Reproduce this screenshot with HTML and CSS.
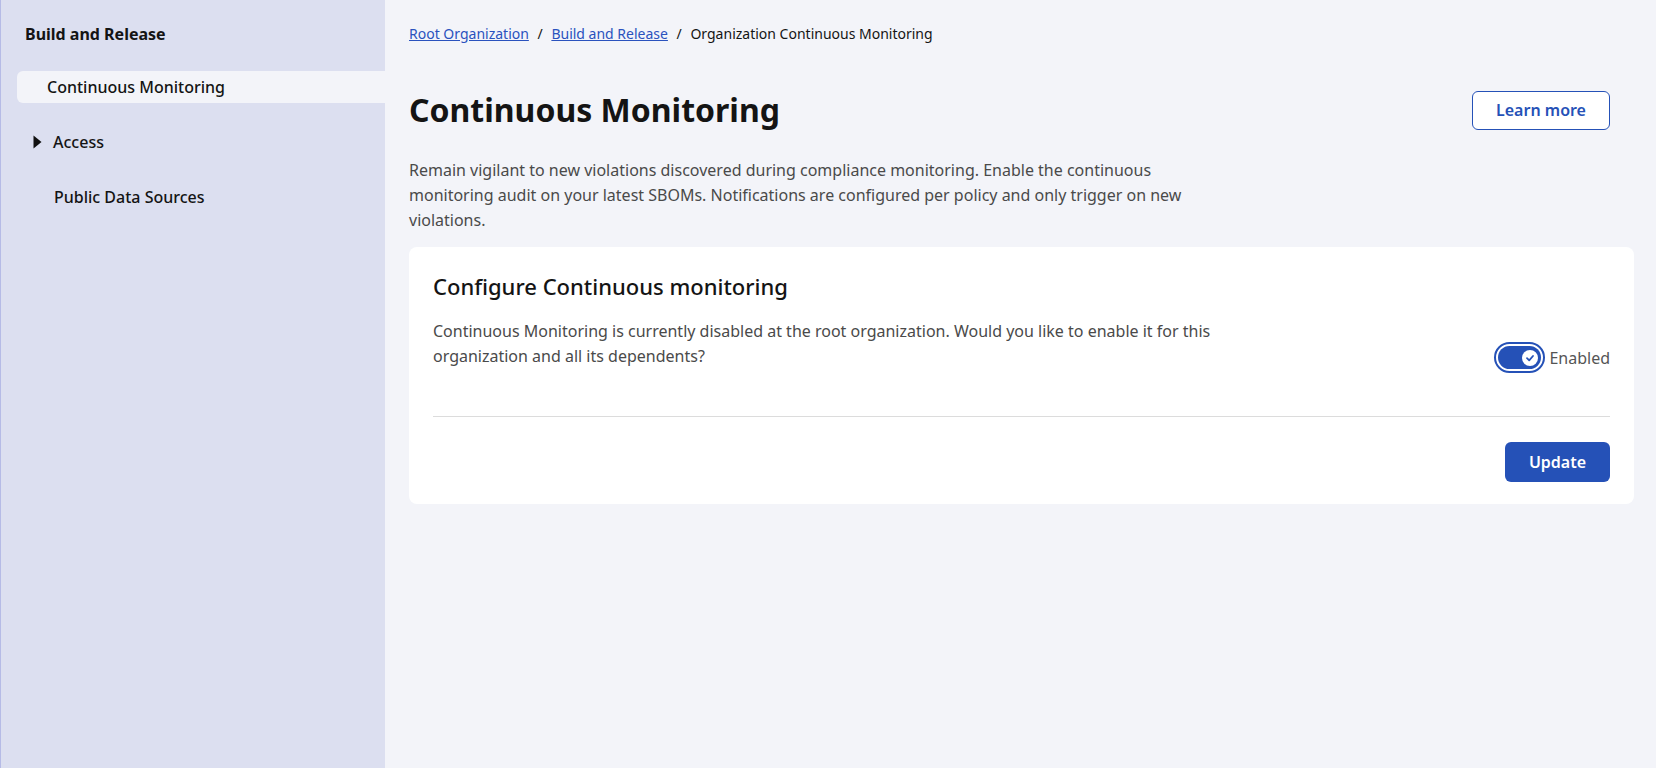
FILE: index.html
```html
<!DOCTYPE html>
<html>
<head>
<meta charset="UTF-8">
<title>Continuous Monitoring</title>
<link rel="stylesheet" href="styles.css">
</head>
<body>

	<div id="side">
		<div class="side-title">Build and Release</div>
		<ul class="nav">
			<li class="nav-item active">Continuous Monitoring</li>
			<li class="nav-item group">
				<svg class="caret" width="9" height="14" viewBox="0 0 9 14"><path d="M0.5 0.5 L8.5 7 L0.5 13.5 Z" fill="#111"/></svg>
				<span>Access</span>
			</li>
			<li class="nav-item sub">Public Data Sources</li>
		</ul>
	</div>

	<div id="main">
		<div class="crumbs">
			<a href="#">Root Organization</a>
			<span class="sep">/</span>
			<a href="#">Build and Release</a>
			<span class="sep">/</span>
			<span>Organization Continuous Monitoring</span>
		</div>

		<div class="head">
			<h1>Continuous Monitoring</h1>
			<button class="btn-outline">Learn more</button>
		</div>

		<p class="intro">Remain vigilant to new violations discovered during compliance monitoring. Enable the continuous monitoring audit on your latest SBOMs. Notifications are configured per policy and only trigger on new violations.</p>

		<div class="card">
			<h2>Configure Continuous monitoring</h2>
			<div class="card-row">
				<p class="card-text">Continuous Monitoring is currently disabled at the root organization. Would you like to enable it for this organization and all its dependents?</p>
				<div class="switch">
					<span class="toggle">
						<span class="track">
							<span class="knob">
								<svg width="10" height="10" viewBox="0 0 10 10"><path d="M2 5.2 L4.2 7.3 L8 3" fill="none" stroke="#2551b7" stroke-width="1.8" stroke-linecap="round" stroke-linejoin="round"/></svg>
							</span>
						</span>
					</span>
					<span class="switch-label">Enabled</span>
				</div>
			</div>
			<div class="card-foot">
				<button class="btn-primary">Update</button>
			</div>
		</div>
	</div>

</body>
</html>
```

FILE: styles.css
```css
body, div, ul, li, h1, h2, p{
	margin : 0;
	padding : 0;
}
body{
	display : flex;
	height : 768px;
	background : #f3f4f9;
	font-family : "Noto Sans", "Open Sans", sans-serif;
	color : #141414;
}
#side{
	width : 384px;
	flex : none;
	border-left : 1px solid #b6bbe6;
	background : #dcdff0;
	padding-top : 22px;
}
.side-title{
	padding-left : 24px;
	font-size : 16px;
	font-weight : 700;
	line-height : 24px;
}
.nav{
	list-style-type : none;
	margin-top : 25px;
	margin-left : 16px;
	display : flex;
	flex-direction : column;
	gap : 23px;
}
.nav-item{
	height : 32px;
	display : flex;
	align-items : center;
	font-size : 16px;
	font-weight : 500;
}
.active{
	background : #f3f4f9;
	border-radius : 6px 0 0 6px;
	padding-left : 30px;
}
.group{
	padding-left : 16px;
	gap : 11px;
}
.sub{
	padding-left : 37px;
}
#main{
	flex : 1;
	padding : 24px 22px 24px 24px;
}
.crumbs{
	font-size : 14px;
	line-height : 20px;
}
.crumbs a{
	color : #2a52be;
}
.sep{
	margin : 0 5px;
}
.head{
	display : flex;
	align-items : center;
	justify-content : space-between;
	margin-top : 46px;
	padding-right : 24px;
}
h1{
	font-size : 32px;
	line-height : 40px;
	font-weight : 700;
}
.btn-outline{
	width : 138px;
	height : 39px;
	background : #fff;
	border : 1px solid #2551b7;
	border-radius : 6px;
	color : #2551b7;
	font-family : inherit;
	font-size : 16px;
	font-weight : 600;
}
.intro{
	margin-top : 28px;
	max-width : 800px;
	font-size : 16px;
	line-height : 24.8px;
	color : #4a4a4a;
}
.card{
	margin-top : 15px;
	background : #fff;
	border-radius : 8px;
	padding : 24px 24px 22px 24px;
}
h2{
	font-size : 22px;
	line-height : 30px;
	font-weight : 500;
}
.card-row{
	display : flex;
	justify-content : space-between;
	align-items : flex-end;
	margin-top : 18px;
	padding-bottom : 48px;
	border-bottom : 1px solid #dcdcdc;
}
.card-text{
	max-width : 790px;
	font-size : 16px;
	line-height : 24.5px;
	color : #4a4a4a;
}
.switch{
	display : flex;
	align-items : center;
	gap : 4px;
	margin-bottom : -5px;
}
.toggle{
	display : flex;
	box-sizing : border-box;
	width : 51px;
	height : 31px;
	padding : 2px;
	border : 2px solid #2551b7;
	border-radius : 16px;
	background : #fff;
}
.track{
	flex : 1;
	display : flex;
	align-items : center;
	justify-content : flex-end;
	padding-right : 3px;
	background : #2551b7;
	border-radius : 12px;
}
.knob{
	width : 16px;
	height : 16px;
	border-radius : 50%;
	background : #fff;
	display : flex;
	align-items : center;
	justify-content : center;
}
.switch-label{
	font-size : 16px;
	color : #555;
}
.card-foot{
	display : flex;
	justify-content : flex-end;
	margin-top : 25px;
}
.btn-primary{
	width : 105px;
	height : 40px;
	background : #2551b7;
	border : none;
	border-radius : 6px;
	color : #fff;
	font-family : inherit;
	font-size : 16px;
	font-weight : 600;
}
```
